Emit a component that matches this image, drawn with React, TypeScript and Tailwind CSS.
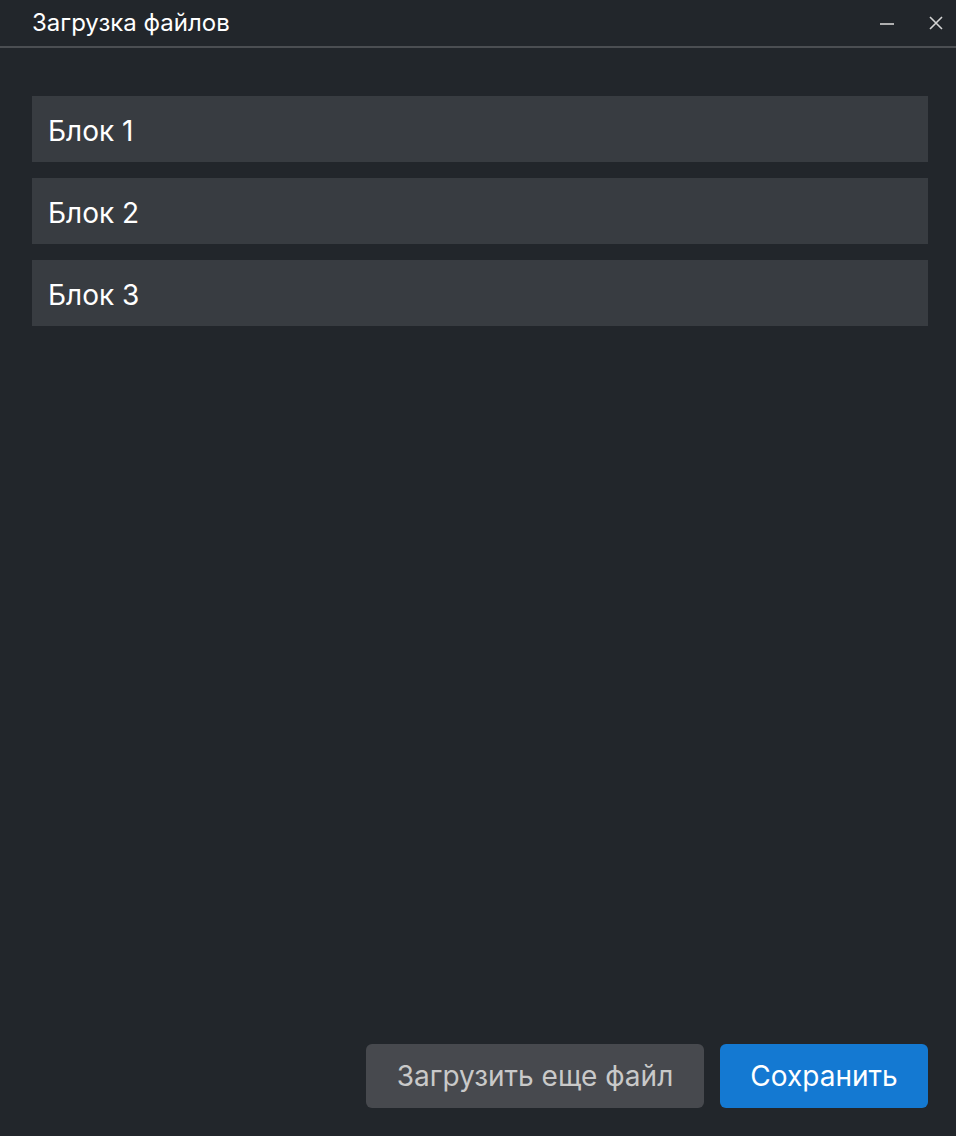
export default function App() {
  const blocks = ["Блок 1", "Блок 2", "Блок 3"];

  return (
    <div className="flex h-[1136px] w-[956px] flex-col bg-[#22262b] font-['Inter','Noto_Sans',sans-serif] text-white">
      {/* title bar */}
      <div className="flex h-[48px] items-center justify-between border-b-2 border-[#4b4e52] pl-8 pr-3">
        <span className="text-[24px] leading-none">Загрузка файлов</span>
        <div className="flex items-center gap-[34px] text-[#d4d4d4]">
          <svg width="14" height="14" viewBox="0 0 14 14">
            <line x1="0" y1="8" x2="14" y2="8" stroke="currentColor" strokeWidth="1.6" />
          </svg>
          <svg width="16" height="16" viewBox="0 0 16 16">
            <path d="M2 2 L14 14 M14 2 L2 14" stroke="currentColor" strokeWidth="1.6" />
          </svg>
        </div>
      </div>

      <div className="flex flex-1 flex-col pl-8 pr-7 pt-12 pb-7">
        <div className="flex flex-col gap-4">
          {blocks.map((b) => (
            <div key={b} className="flex h-[66px] items-center bg-[#383c41] px-4 pt-[3px] text-[28px]">
              {b}
            </div>
          ))}
        </div>

        <div className="mt-auto flex justify-end gap-4">
          <button className="h-[64px] w-[338px] rounded-md bg-[#47494e] text-[28px] text-[#c9c9c9]">
            Загрузить еще файл
          </button>
          <button className="h-[64px] w-[208px] rounded-md bg-[#1479d2] text-[28px] text-white">
            Сохранить
          </button>
        </div>
      </div>
    </div>
  );
}
